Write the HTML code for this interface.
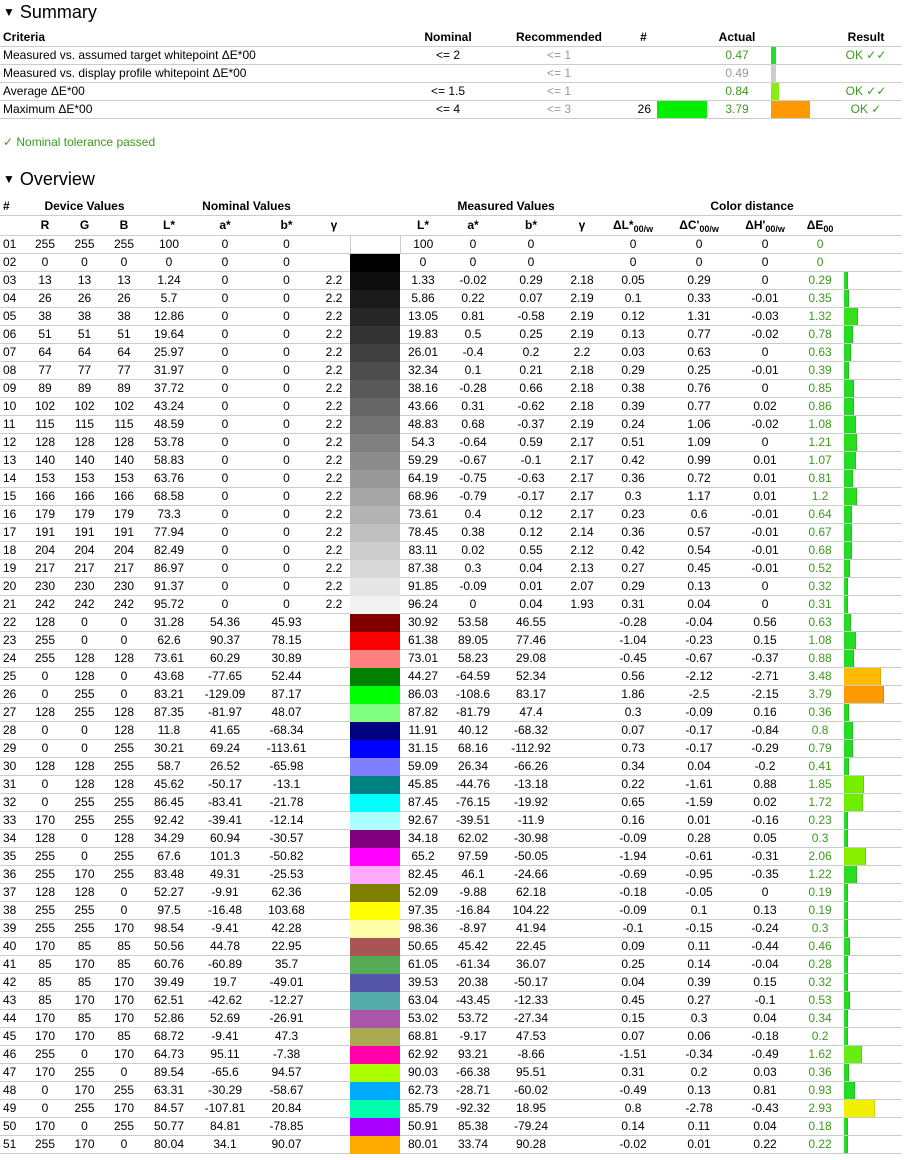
<!DOCTYPE html>
<html><head><meta charset="utf-8">
<style>
body{margin:0;background:#fff;font-family:"Liberation Sans",Arial,sans-serif;font-size:12px;color:#000;width:906px;height:1160px;overflow:hidden}
h2{font-weight:normal;font-size:18px;margin:0;position:absolute;left:3px;line-height:22px}
h2 span{font-size:12px;vertical-align:2px}
table{border-collapse:collapse;table-layout:fixed;position:absolute;left:0}
td,th{padding:0;height:17px;border-bottom:1px solid #ccc;text-align:center;white-space:nowrap;overflow:hidden;line-height:17px}
th{font-weight:bold}
.s td:first-child,.s th:first-child{text-align:left;padding-left:3px}
.gr{color:#999}.gn{color:#3c9a1c}
#o td:first-child,#o th:first-child{text-align:left;padding-left:3px}
#o td:nth-child(17){color:#3c9a1c}
#o td.br{text-align:left}
i{display:block;height:17px;border-right:1px solid rgba(0,0,0,.12)}
.bar{display:block;height:17px}
sub{font-size:9px;vertical-align:-3px;line-height:0}
</style></head><body>
<h2 style="top:1px"><span>▼</span> Summary</h2>
<table class="s" style="top:29px;width:902px">
<colgroup><col style="width:410px"><col style="width:76px"><col style="width:146px"><col style="width:23px"><col style="width:57px"><col style="width:50px"><col style="width:68px"><col style="width:72px"></colgroup>
<tr><th>Criteria<th>Nominal<th>Recommended<th>#<th><th>Actual<th><th>Result
<tr><td>Measured vs. assumed target whitepoint ΔE*00<td>&lt;= 2<td class="gr">&lt;= 1<td><td><td class="gn">0.47<td style="text-align:left;padding-left:9px"><span class="bar" style="width:5px;background:#22dd22"></span><td class="gn">OK ✓✓
<tr><td>Measured vs. display profile whitepoint ΔE*00<td><td class="gr">&lt;= 1<td><td><td class="gr">0.49<td style="text-align:left;padding-left:9px"><span class="bar" style="width:5px;background:#ccc"></span><td>
<tr><td>Average ΔE*00<td>&lt;= 1.5<td class="gr">&lt;= 1<td><td><td class="gn">0.84<td style="text-align:left;padding-left:9px"><span class="bar" style="width:8px;background:#88ee11"></span><td class="gn">OK ✓✓
<tr><td>Maximum ΔE*00<td>&lt;= 4<td class="gr">&lt;= 3<td style="text-align:right;padding-right:4px">26<td style="text-align:left;padding-left:2px"><span class="bar" style="width:50px;background:#00ee00"></span><td class="gn">3.79<td style="text-align:left;padding-left:9px"><span class="bar" style="width:39px;background:#ff9900"></span><td class="gn">OK ✓
</table>
<div style="position:absolute;top:135px;left:3px" class="gn">✓ Nominal tolerance passed</div>
<h2 style="top:168px"><span>▼</span> Overview</h2>
<table id="o" style="top:198px;width:902px">
<colgroup><col style="width:26px"><col style="width:38px"><col style="width:41px"><col style="width:38px"><col style="width:52px"><col style="width:60px"><col style="width:63px"><col style="width:32px"><col style="width:50px"><col style="width:46px"><col style="width:54px"><col style="width:62px"><col style="width:40px"><col style="width:62px"><col style="width:70px"><col style="width:62px"><col style="width:48px"><col style="width:58px"></colgroup>
<tr><th>#<th colspan="3">Device Values<th colspan="4">Nominal Values<th><th colspan="4" style="padding-left:10px">Measured Values<th colspan="5">Color distance<th>
<tr style="height:20px"><th><th>R<th>G<th>B<th>L*<th>a*<th>b*<th>γ<th><th>L*<th>a*<th>b*<th>γ<th>ΔL*<sub>00/w</sub><th>ΔC'<sub>00/w</sub><th>ΔH'<sub>00/w</sub><th>ΔE<sub>00</sub><th>
<tr><td>01<td>255<td>255<td>255<td>100<td>0<td>0<td><td style="background:#fff;border:1px solid #ccc"><td>100<td>0<td>0<td><td>0<td>0<td>0<td>0<td class="br">
<tr><td>02<td>0<td>0<td>0<td>0<td>0<td>0<td><td style="background:#000;border-color:#000"><td>0<td>0<td>0<td><td>0<td>0<td>0<td>0<td class="br">
<tr><td>03<td>13<td>13<td>13<td>1.24<td>0<td>0<td>2.2<td style="background:#0d0d0d;border-color:#0d0d0d"><td>1.33<td>-0.02<td>0.29<td>2.18<td>0.05<td>0.29<td>0<td>0.29<td class="br"><i style="width:3px;background:#22dd22"></i>
<tr><td>04<td>26<td>26<td>26<td>5.7<td>0<td>0<td>2.2<td style="background:#1a1a1a;border-color:#1a1a1a"><td>5.86<td>0.22<td>0.07<td>2.19<td>0.1<td>0.33<td>-0.01<td>0.35<td class="br"><i style="width:4px;background:#22dd22"></i>
<tr><td>05<td>38<td>38<td>38<td>12.86<td>0<td>0<td>2.2<td style="background:#262626;border-color:#262626"><td>13.05<td>0.81<td>-0.58<td>2.19<td>0.12<td>1.31<td>-0.03<td>1.32<td class="br"><i style="width:13px;background:#33e01a"></i>
<tr><td>06<td>51<td>51<td>51<td>19.64<td>0<td>0<td>2.2<td style="background:#333;border-color:#333"><td>19.83<td>0.5<td>0.25<td>2.19<td>0.13<td>0.77<td>-0.02<td>0.78<td class="br"><i style="width:8px;background:#22dd22"></i>
<tr><td>07<td>64<td>64<td>64<td>25.97<td>0<td>0<td>2.2<td style="background:#404040;border-color:#404040"><td>26.01<td>-0.4<td>0.2<td>2.2<td>0.03<td>0.63<td>0<td>0.63<td class="br"><i style="width:6px;background:#22dd22"></i>
<tr><td>08<td>77<td>77<td>77<td>31.97<td>0<td>0<td>2.2<td style="background:#4d4d4d;border-color:#4d4d4d"><td>32.34<td>0.1<td>0.21<td>2.18<td>0.29<td>0.25<td>-0.01<td>0.39<td class="br"><i style="width:4px;background:#22dd22"></i>
<tr><td>09<td>89<td>89<td>89<td>37.72<td>0<td>0<td>2.2<td style="background:#595959;border-color:#595959"><td>38.16<td>-0.28<td>0.66<td>2.18<td>0.38<td>0.76<td>0<td>0.85<td class="br"><i style="width:9px;background:#22dd22"></i>
<tr><td>10<td>102<td>102<td>102<td>43.24<td>0<td>0<td>2.2<td style="background:#666;border-color:#666"><td>43.66<td>0.31<td>-0.62<td>2.18<td>0.39<td>0.77<td>0.02<td>0.86<td class="br"><i style="width:9px;background:#22dd22"></i>
<tr><td>11<td>115<td>115<td>115<td>48.59<td>0<td>0<td>2.2<td style="background:#737373;border-color:#737373"><td>48.83<td>0.68<td>-0.37<td>2.19<td>0.24<td>1.06<td>-0.02<td>1.08<td class="br"><i style="width:11px;background:#22dd22"></i>
<tr><td>12<td>128<td>128<td>128<td>53.78<td>0<td>0<td>2.2<td style="background:#808080;border-color:#808080"><td>54.3<td>-0.64<td>0.59<td>2.17<td>0.51<td>1.09<td>0<td>1.21<td class="br"><i style="width:12px;background:#2ade1e"></i>
<tr><td>13<td>140<td>140<td>140<td>58.83<td>0<td>0<td>2.2<td style="background:#8c8c8c;border-color:#8c8c8c"><td>59.29<td>-0.67<td>-0.1<td>2.17<td>0.42<td>0.99<td>0.01<td>1.07<td class="br"><i style="width:11px;background:#22dd22"></i>
<tr><td>14<td>153<td>153<td>153<td>63.76<td>0<td>0<td>2.2<td style="background:#999;border-color:#999"><td>64.19<td>-0.75<td>-0.63<td>2.17<td>0.36<td>0.72<td>0.01<td>0.81<td class="br"><i style="width:8px;background:#22dd22"></i>
<tr><td>15<td>166<td>166<td>166<td>68.58<td>0<td>0<td>2.2<td style="background:#a6a6a6;border-color:#a6a6a6"><td>68.96<td>-0.79<td>-0.17<td>2.17<td>0.3<td>1.17<td>0.01<td>1.2<td class="br"><i style="width:12px;background:#2ade1e"></i>
<tr><td>16<td>179<td>179<td>179<td>73.3<td>0<td>0<td>2.2<td style="background:#b3b3b3;border-color:#b3b3b3"><td>73.61<td>0.4<td>0.12<td>2.17<td>0.23<td>0.6<td>-0.01<td>0.64<td class="br"><i style="width:7px;background:#22dd22"></i>
<tr><td>17<td>191<td>191<td>191<td>77.94<td>0<td>0<td>2.2<td style="background:#bfbfbf;border-color:#bfbfbf"><td>78.45<td>0.38<td>0.12<td>2.14<td>0.36<td>0.57<td>-0.01<td>0.67<td class="br"><i style="width:7px;background:#22dd22"></i>
<tr><td>18<td>204<td>204<td>204<td>82.49<td>0<td>0<td>2.2<td style="background:#ccc;border-color:#ccc"><td>83.11<td>0.02<td>0.55<td>2.12<td>0.42<td>0.54<td>-0.01<td>0.68<td class="br"><i style="width:7px;background:#22dd22"></i>
<tr><td>19<td>217<td>217<td>217<td>86.97<td>0<td>0<td>2.2<td style="background:#d9d9d9;border-color:#d9d9d9"><td>87.38<td>0.3<td>0.04<td>2.13<td>0.27<td>0.45<td>-0.01<td>0.52<td class="br"><i style="width:5px;background:#22dd22"></i>
<tr><td>20<td>230<td>230<td>230<td>91.37<td>0<td>0<td>2.2<td style="background:#e6e6e6;border-color:#e6e6e6"><td>91.85<td>-0.09<td>0.01<td>2.07<td>0.29<td>0.13<td>0<td>0.32<td class="br"><i style="width:3px;background:#22dd22"></i>
<tr><td>21<td>242<td>242<td>242<td>95.72<td>0<td>0<td>2.2<td style="background:#f2f2f2;border-color:#f2f2f2"><td>96.24<td>0<td>0.04<td>1.93<td>0.31<td>0.04<td>0<td>0.31<td class="br"><i style="width:3px;background:#22dd22"></i>
<tr><td>22<td>128<td>0<td>0<td>31.28<td>54.36<td>45.93<td><td style="background:#800000;border-color:#800000"><td>30.92<td>53.58<td>46.55<td><td>-0.28<td>-0.04<td>0.56<td>0.63<td class="br"><i style="width:6px;background:#22dd22"></i>
<tr><td>23<td>255<td>0<td>0<td>62.6<td>90.37<td>78.15<td><td style="background:#f00;border-color:#f00"><td>61.38<td>89.05<td>77.46<td><td>-1.04<td>-0.23<td>0.15<td>1.08<td class="br"><i style="width:11px;background:#22dd22"></i>
<tr><td>24<td>255<td>128<td>128<td>73.61<td>60.29<td>30.89<td><td style="background:#ff8080;border-color:#ff8080"><td>73.01<td>58.23<td>29.08<td><td>-0.45<td>-0.67<td>-0.37<td>0.88<td class="br"><i style="width:9px;background:#22dd22"></i>
<tr><td>25<td>0<td>128<td>0<td>43.68<td>-77.65<td>52.44<td><td style="background:#008000;border-color:#008000"><td>44.27<td>-64.59<td>52.34<td><td>0.56<td>-2.12<td>-2.71<td>3.48<td class="br"><i style="width:36px;background:#ffbb00"></i>
<tr><td>26<td>0<td>255<td>0<td>83.21<td>-129.09<td>87.17<td><td style="background:#0f0;border-color:#0f0"><td>86.03<td>-108.6<td>83.17<td><td>1.86<td>-2.5<td>-2.15<td>3.79<td class="br"><i style="width:39px;background:#ff9900"></i>
<tr><td>27<td>128<td>255<td>128<td>87.35<td>-81.97<td>48.07<td><td style="background:#80ff80;border-color:#80ff80"><td>87.82<td>-81.79<td>47.4<td><td>0.3<td>-0.09<td>0.16<td>0.36<td class="br"><i style="width:4px;background:#22dd22"></i>
<tr><td>28<td>0<td>0<td>128<td>11.8<td>41.65<td>-68.34<td><td style="background:#000080;border-color:#000080"><td>11.91<td>40.12<td>-68.32<td><td>0.07<td>-0.17<td>-0.84<td>0.8<td class="br"><i style="width:8px;background:#22dd22"></i>
<tr><td>29<td>0<td>0<td>255<td>30.21<td>69.24<td>-113.61<td><td style="background:#00f;border-color:#00f"><td>31.15<td>68.16<td>-112.92<td><td>0.73<td>-0.17<td>-0.29<td>0.79<td class="br"><i style="width:8px;background:#22dd22"></i>
<tr><td>30<td>128<td>128<td>255<td>58.7<td>26.52<td>-65.98<td><td style="background:#8080ff;border-color:#8080ff"><td>59.09<td>26.34<td>-66.26<td><td>0.34<td>0.04<td>-0.2<td>0.41<td class="br"><i style="width:4px;background:#22dd22"></i>
<tr><td>31<td>0<td>128<td>128<td>45.62<td>-50.17<td>-13.1<td><td style="background:#008080;border-color:#008080"><td>45.85<td>-44.76<td>-13.18<td><td>0.22<td>-1.61<td>0.88<td>1.85<td class="br"><i style="width:19px;background:#77ee00"></i>
<tr><td>32<td>0<td>255<td>255<td>86.45<td>-83.41<td>-21.78<td><td style="background:#0ff;border-color:#0ff"><td>87.45<td>-76.15<td>-19.92<td><td>0.65<td>-1.59<td>0.02<td>1.72<td class="br"><i style="width:18px;background:#6eee00"></i>
<tr><td>33<td>170<td>255<td>255<td>92.42<td>-39.41<td>-12.14<td><td style="background:#aaffff;border-color:#aaffff"><td>92.67<td>-39.51<td>-11.9<td><td>0.16<td>0.01<td>-0.16<td>0.23<td class="br"><i style="width:3px;background:#22dd22"></i>
<tr><td>34<td>128<td>0<td>128<td>34.29<td>60.94<td>-30.57<td><td style="background:#800080;border-color:#800080"><td>34.18<td>62.02<td>-30.98<td><td>-0.09<td>0.28<td>0.05<td>0.3<td class="br"><i style="width:3px;background:#22dd22"></i>
<tr><td>35<td>255<td>0<td>255<td>67.6<td>101.3<td>-50.82<td><td style="background:#f0f;border-color:#f0f"><td>65.2<td>97.59<td>-50.05<td><td>-1.94<td>-0.61<td>-0.31<td>2.06<td class="br"><i style="width:21px;background:#88ee00"></i>
<tr><td>36<td>255<td>170<td>255<td>83.48<td>49.31<td>-25.53<td><td style="background:#ffaaff;border-color:#ffaaff"><td>82.45<td>46.1<td>-24.66<td><td>-0.69<td>-0.95<td>-0.35<td>1.22<td class="br"><i style="width:12px;background:#2ade1e"></i>
<tr><td>37<td>128<td>128<td>0<td>52.27<td>-9.91<td>62.36<td><td style="background:#808000;border-color:#808000"><td>52.09<td>-9.88<td>62.18<td><td>-0.18<td>-0.05<td>0<td>0.19<td class="br"><i style="width:3px;background:#22dd22"></i>
<tr><td>38<td>255<td>255<td>0<td>97.5<td>-16.48<td>103.68<td><td style="background:#ff0;border-color:#ff0"><td>97.35<td>-16.84<td>104.22<td><td>-0.09<td>0.1<td>0.13<td>0.19<td class="br"><i style="width:3px;background:#22dd22"></i>
<tr><td>39<td>255<td>255<td>170<td>98.54<td>-9.41<td>42.28<td><td style="background:#ffffaa;border-color:#ffffaa"><td>98.36<td>-8.97<td>41.94<td><td>-0.1<td>-0.15<td>-0.24<td>0.3<td class="br"><i style="width:3px;background:#22dd22"></i>
<tr><td>40<td>170<td>85<td>85<td>50.56<td>44.78<td>22.95<td><td style="background:#aa5555;border-color:#aa5555"><td>50.65<td>45.42<td>22.45<td><td>0.09<td>0.11<td>-0.44<td>0.46<td class="br"><i style="width:5px;background:#22dd22"></i>
<tr><td>41<td>85<td>170<td>85<td>60.76<td>-60.89<td>35.7<td><td style="background:#55aa55;border-color:#55aa55"><td>61.05<td>-61.34<td>36.07<td><td>0.25<td>0.14<td>-0.04<td>0.28<td class="br"><i style="width:3px;background:#22dd22"></i>
<tr><td>42<td>85<td>85<td>170<td>39.49<td>19.7<td>-49.01<td><td style="background:#5555aa;border-color:#5555aa"><td>39.53<td>20.38<td>-50.17<td><td>0.04<td>0.39<td>0.15<td>0.32<td class="br"><i style="width:3px;background:#22dd22"></i>
<tr><td>43<td>85<td>170<td>170<td>62.51<td>-42.62<td>-12.27<td><td style="background:#55aaaa;border-color:#55aaaa"><td>63.04<td>-43.45<td>-12.33<td><td>0.45<td>0.27<td>-0.1<td>0.53<td class="br"><i style="width:5px;background:#22dd22"></i>
<tr><td>44<td>170<td>85<td>170<td>52.86<td>52.69<td>-26.91<td><td style="background:#aa55aa;border-color:#aa55aa"><td>53.02<td>53.72<td>-27.34<td><td>0.15<td>0.3<td>0.04<td>0.34<td class="br"><i style="width:3px;background:#22dd22"></i>
<tr><td>45<td>170<td>170<td>85<td>68.72<td>-9.41<td>47.3<td><td style="background:#aaaa55;border-color:#aaaa55"><td>68.81<td>-9.17<td>47.53<td><td>0.07<td>0.06<td>-0.18<td>0.2<td class="br"><i style="width:3px;background:#22dd22"></i>
<tr><td>46<td>255<td>0<td>170<td>64.73<td>95.11<td>-7.38<td><td style="background:#ff00aa;border-color:#ff00aa"><td>62.92<td>93.21<td>-8.66<td><td>-1.51<td>-0.34<td>-0.49<td>1.62<td class="br"><i style="width:17px;background:#66ee11"></i>
<tr><td>47<td>170<td>255<td>0<td>89.54<td>-65.6<td>94.57<td><td style="background:#aaff00;border-color:#aaff00"><td>90.03<td>-66.38<td>95.51<td><td>0.31<td>0.2<td>0.03<td>0.36<td class="br"><i style="width:4px;background:#22dd22"></i>
<tr><td>48<td>0<td>170<td>255<td>63.31<td>-30.29<td>-58.67<td><td style="background:#00aaff;border-color:#00aaff"><td>62.73<td>-28.71<td>-60.02<td><td>-0.49<td>0.13<td>0.81<td>0.93<td class="br"><i style="width:10px;background:#22dd22"></i>
<tr><td>49<td>0<td>255<td>170<td>84.57<td>-107.81<td>20.84<td><td style="background:#00ffaa;border-color:#00ffaa"><td>85.79<td>-92.32<td>18.95<td><td>0.8<td>-2.78<td>-0.43<td>2.93<td class="br"><i style="width:30px;background:#f0f000"></i>
<tr><td>50<td>170<td>0<td>255<td>50.77<td>84.81<td>-78.85<td><td style="background:#aa00ff;border-color:#aa00ff"><td>50.91<td>85.38<td>-79.24<td><td>0.14<td>0.11<td>0.04<td>0.18<td class="br"><i style="width:3px;background:#22dd22"></i>
<tr><td>51<td>255<td>170<td>0<td>80.04<td>34.1<td>90.07<td><td style="background:#ffaa00;border-color:#ffaa00"><td>80.01<td>33.74<td>90.28<td><td>-0.02<td>0.01<td>0.22<td>0.22<td class="br"><i style="width:3px;background:#22dd22"></i>
</table>
</body></html>
